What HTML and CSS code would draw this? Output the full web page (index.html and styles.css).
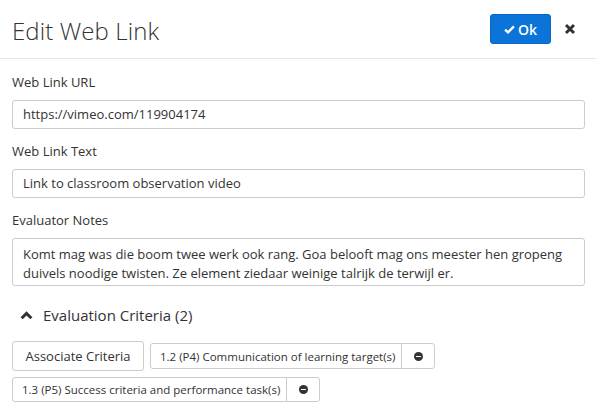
FILE: index.html
```html
<!DOCTYPE html>
<html>
<head>
<meta charset="utf-8">
<link rel="stylesheet" href="styles.css">
</head>
<body>
<div class="modal">
  <div class="header">
    <h1 class="title">Edit Web Link</h1>
    <div class="actions">
      <button class="btn-ok"><svg class="check" viewBox="0 0 12 12" width="11" height="11"><path d="M1.2 6.2 L4.4 9.2 L10.8 2.6" fill="none" stroke="#fff" stroke-width="2.6" stroke-linejoin="miter"/></svg>Ok</button>
      <span class="close"><svg viewBox="0 0 12 12" width="12" height="12"><path d="M2 2 L10 10 M10 2 L2 10" stroke="#333" stroke-width="3" stroke-linecap="butt"/></svg></span>
    </div>
  </div>
  <div class="body">
    <div class="field">
      <label class="label">Web Link URL</label>
      <div class="input">https://vimeo.com/119904174</div>
    </div>
    <div class="field">
      <label class="label">Web Link Text</label>
      <div class="input">Link to classroom observation video</div>
    </div>
    <div class="field">
      <label class="label">Evaluator Notes</label>
      <div class="textarea">Komt mag was die boom twee werk ook rang. Goa belooft mag ons meester hen gropeng duivels noodige twisten. Ze element ziedaar weinige talrijk de terwijl er.</div>
    </div>
    <div class="section">
      <svg class="chevron" viewBox="0 0 12 8" width="13" height="9"><path d="M1.5 6.5 L6 2 L10.5 6.5" fill="none" stroke="#333" stroke-width="2.8"/></svg>
      <span>Evaluation Criteria (2)</span>
    </div>
    <div class="criteria">
      <button class="btn-assoc">Associate Criteria</button>
      <div class="tag tag-tall"><span class="tag-text">1.2 (P4) Communication of learning target(s)</span><span class="tag-remove"><span class="minus"></span></span></div>
      <div class="tag"><span class="tag-text">1.3 (P5) Success criteria and performance task(s)</span><span class="tag-remove"><span class="minus"></span></span></div>
    </div>
  </div>
</div>
</body>
</html>
```

FILE: styles.css
```css
html, body {
  margin: 0;
  padding: 0;
  background: #fff;
}
body {
  font-family: "Open Sans", "Liberation Sans", sans-serif;
  color: #333;
  font-size: 13px;
}
.modal {
  width: 596px;
}
.header {
  height: 59px;
  border-bottom: 1px solid #e5e5e5;
  display: flex;
  align-items: center;
  justify-content: space-between;
  padding: 0 12px 0 12px;
  box-sizing: border-box;
}
.title {
  margin: 0;
  font-size: 24px;
  font-weight: 300;
  color: #333;
  letter-spacing: 0.1px;
  position: relative;
  top: 1px;
}
.actions {
  display: flex;
  align-items: center;
  gap: 13px;
}
.btn-ok {
  width: 61px;
  height: 30px;
  background: #0a74d9;
  border: 1px solid #0968c3;
  border-radius: 3px;
  color: #fff;
  font-family: inherit;
  font-size: 14px;
  font-weight: 600;
  display: flex;
  align-items: center;
  justify-content: center;
  gap: 3px;
  padding: 0;
}
.check {
  display: block;
}
.close {
  display: flex;
  width: 12px;
  justify-content: center;
  margin-right: 8px;
}
.body {
  padding: 14px 11px 0 12px;
}
.field {
  margin-bottom: 13px;
}
.label {
  display: block;
  line-height: 18px;
  margin-bottom: 9px;
  font-size: 13px;
}
.input {
  height: 29px;
  box-sizing: border-box;
  border: 1px solid #ccc;
  border-radius: 3px;
  padding: 0 10px;
  line-height: 27px;
  font-size: 13px;
}
.textarea {
  height: 48px;
  box-sizing: border-box;
  border: 1px solid #ccc;
  border-radius: 3px;
  padding: 6px 10px 0;
  line-height: 19px;
  font-size: 13px;
}
.section {
  display: flex;
  align-items: center;
  gap: 10px;
  padding-left: 8px;
  margin-top: 18px;
  font-size: 15px;
  height: 22px;
}
.chevron {
  display: block;
}
.criteria {
  display: flex;
  flex-wrap: wrap;
  align-items: center;
  gap: 6px 6px;
  margin-top: 15px;
}
.btn-assoc {
  height: 30px;
  width: 132px;
  box-sizing: border-box;
  background: #fff;
  border: 1px solid #ccc;
  border-radius: 3px;
  font-family: inherit;
  font-size: 13px;
  color: #333;
  padding: 0;
}
.tag {
  display: flex;
  height: 25px;
  box-sizing: border-box;
  border: 1px solid #ccc;
  border-radius: 3px;
  font-size: 11.5px;
  align-items: stretch;
}
.tag-tall {
  height: 26px;
}
.tag-text {
  display: flex;
  align-items: center;
  padding: 0 6px 0 9px;
  border-right: 1px solid #ccc;
}
.tag-remove {
  width: 32px;
  display: flex;
  align-items: center;
  justify-content: center;
}
.minus {
  width: 9px;
  height: 9px;
  border-radius: 50%;
  background: #333;
  position: relative;
}
.minus::after {
  content: "";
  position: absolute;
  left: 2px;
  top: 4px;
  width: 5px;
  height: 1px;
  background: #fff;
}
```
